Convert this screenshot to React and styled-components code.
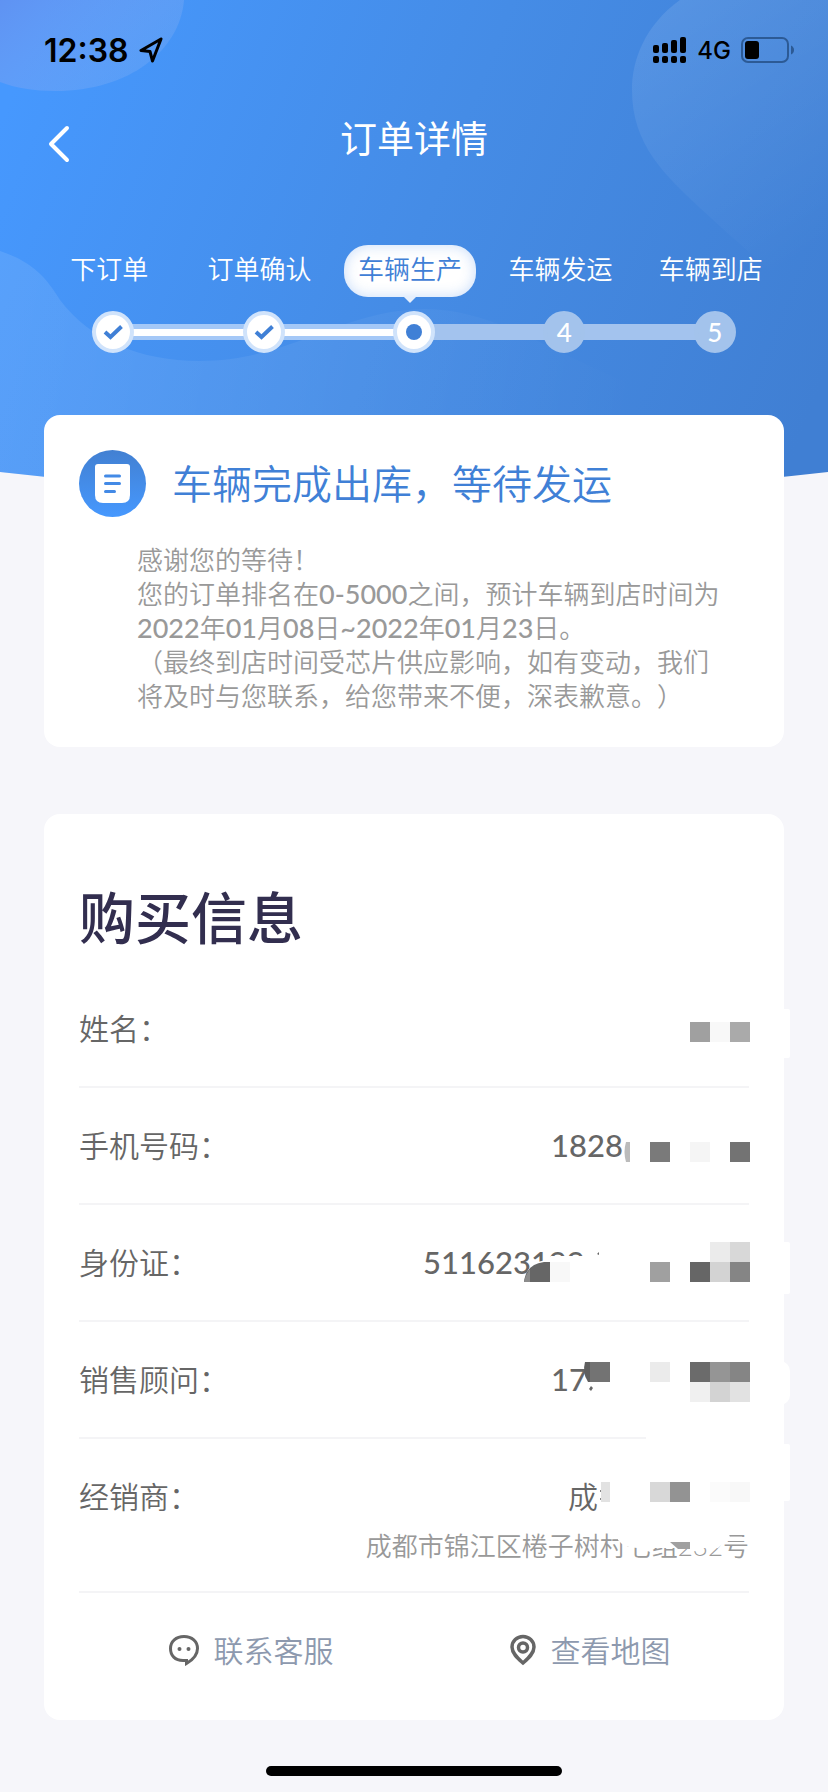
import React from 'react';
import styled, { createGlobalStyle } from 'styled-components';

const GlobalStyle = createGlobalStyle`
  body {
    margin: 0;
    background: #f6f6fa;
    font-family: Lato, 'Noto Sans CJK SC', sans-serif;
    font-weight: 350;
    text-spacing-trim: space-all;
  }

  * {
    box-sizing: border-box;
  }
`;

const Page = styled.div`
  position: relative;
  min-height: 100vh;
`;

const Backdrop = styled.svg`
  position: absolute;
  top: 0;
  left: 0;
  width: 100%;
  height: 492px;
  display: block;
`;

const Content = styled.div`
  position: relative;
  padding: 0 44px 16px;
`;

const StatusBar = styled.div`
  display: flex;
  align-items: center;
  justify-content: space-between;
  height: 100px;
  margin-right: -10px;
  font-family: Inter, sans-serif;
  color: #000;
`;

const StatusGroup = styled.div`
  display: flex;
  align-items: center;
  gap: 10px;
`;

const Time = styled.span`
  font-size: 32px;
  font-weight: 600;
`;

const Network = styled.span`
  font-size: 24px;
  font-weight: 500;
`;

const NavBar = styled.header`
  display: grid;
  grid-template-columns: 60px 1fr 60px;
  align-items: center;
  height: 84px;
  color: #fff;
`;

const BackButton = styled.button`
  display: flex;
  padding: 4px 4px 0;
  border: none;
  background: none;
  color: inherit;
`;

const NavTitle = styled.h1`
  margin: 0;
  padding-bottom: 6px;
  text-align: center;
  font-size: 37px;
  line-height: 48px;
  font-weight: 400;
`;

const Steps = styled.ol`
  display: grid;
  grid-template-columns: repeat(5, 1fr);
  margin: 61px -6px 62px;
  padding: 0;
  list-style: none;
`;

const Step = styled.li`
  display: flex;
  flex-direction: column;
  gap: 14px;
`;

const StepLabel = styled.span`
  position: relative;
  align-self: center;
  height: 52px;
  margin-right: 8px;
  padding: 0 14px;
  border-radius: 24px;
  font-size: 26px;
  line-height: 48px;
  white-space: nowrap;
  color: ${({ $current }) => ($current ? '#4080d6' : '#fff')};
  background: ${({ $current }) => ($current ? '#fff' : 'none')};
  box-shadow: ${({ $current }) =>
    $current ? 'inset 0 0 14px rgba(70, 140, 235, 0.3)' : 'none'};

  &::after {
    content: '';
    display: ${({ $current }) => ($current ? 'block' : 'none')};
    position: absolute;
    top: 100%;
    left: 50%;
    margin-left: -6px;
    border: 6px solid transparent;
    border-top-color: #e6effc;
    border-bottom: none;
  }
`;

const Track = styled.div`
  display: flex;
  align-items: center;
`;

const Segment = styled.span`
  flex: 1;
  height: 16px;
  margin: 0 -3px;
  visibility: ${({ $kind }) => ($kind === 'none' ? 'hidden' : 'visible')};
  background: ${({ $kind }) =>
    $kind === 'done'
      ? 'linear-gradient(#a4c8f7 5px, #fff 5px, #fff 12px, #a4c8f7 12px)'
      : '#a3c3ee'};
`;

const Node = styled.span`
  position: relative;
  display: flex;
  align-items: center;
  justify-content: center;
  width: 42px;
  height: 42px;
  border: 4px solid ${({ $todo }) => ($todo ? '#a3c3ec' : '#d0e3fb')};
  border-radius: 50%;
  background: ${({ $todo }) => ($todo ? '#a3c3ec' : '#fff')};
  color: #fff;
  font-size: 26px;
  line-height: 34px;
  font-weight: 500;
`;

const Dot = styled.span`
  width: 16px;
  height: 16px;
  border-radius: 50%;
  background: #4080d6;
`;

const Card = styled.section`
  padding: 0 35px;
  border-radius: 16px;
  background: #fff;
`;

const NoticeCard = styled(Card)`
  padding: 35px 60px 34px 35px;
`;

const NoticeHead = styled.div`
  display: flex;
  align-items: center;
  gap: 25px;
`;

const NoticeTitle = styled.h2`
  margin: 0;
  font-size: 40px;
  line-height: 68px;
  font-weight: 350;
  color: #4080d6;
`;

const NoticeText = styled.p`
  margin: ${({ $first }) => ($first ? '25px' : '0')} 0 0 58px;
  font-size: 26px;
  line-height: 34px;
  color: #999;
`;

const Num = styled.span`
  font-size: 27px;
  font-weight: 500;
`;

const InfoCard = styled(Card)`
  margin-top: 67px;
  padding-top: 70px;
  padding-bottom: 13px;
`;

const InfoTitle = styled.h2`
  margin: 0 0 19px;
  font-size: 56px;
  line-height: 68px;
  font-weight: 500;
  color: #322e4f;
`;

const InfoList = styled.dl`
  margin: 0;
`;

const InfoRow = styled.div`
  position: relative;
  display: flex;
  justify-content: space-between;
  padding: 40px 0 ${({ $last }) => ($last ? '28px' : '40px')};
  border-bottom: 2px solid #f4f4f6;
  font-size: 30px;
  line-height: 35px;
  color: #666;
`;

const InfoLabel = styled.dt`
  white-space: nowrap;
`;

const InfoValue = styled.dd`
  display: flex;
  flex-direction: column;
  align-items: flex-end;
  margin: 0;
`;

const ValueText = styled.span`
  width: ${({ $width }) => $width}px;
  font-size: ${({ $digits }) => ($digits ? '31px' : '30px')};
  font-weight: ${({ $digits }) => ($digits ? 500 : 350)};
`;

const Address = styled.span`
  margin-top: 15px;
  font-size: 26px;
  line-height: 34px;
  color: #999;
`;

const MosaicLayer = styled.svg`
  position: absolute;
  top: 0;
  right: -41px;
  overflow: visible;
`;

const Actions = styled.div`
  display: flex;
  justify-content: space-around;
  align-items: center;
  gap: 18px;
  height: 114px;
  padding-left: 10px;
`;

const Action = styled.button`
  display: flex;
  align-items: center;
  gap: 14px;
  padding: 0;
  border: none;
  background: none;
  font-family: inherit;
  font-size: 30px;
  line-height: 40px;
  font-weight: 350;
  color: #8d99ae;
`;

const HomeIndicator = styled.div`
  width: 40%;
  height: 10px;
  margin: 46px auto 0;
  border-radius: 5px;
  background: #000;
`;

const steps = [
  { label: '下订单', state: 'done' },
  { label: '订单确认', state: 'done' },
  { label: '车辆生产', state: 'current' },
  { label: '车辆发运', state: 'todo' },
  { label: '车辆到店', state: 'todo' },
];

// tiles: [x, y, colour]; each tile is 20px wide
const rows = [
  {
    label: '姓名：',
    tiles: [[170, 51, '#a0a0a0'], [190, 51, '#f8f8f8'], [210, 51, '#aaa']],
    edge: [38, 49, 2],
  },
  {
    label: '手机号码：',
    value: '1828',
    digits: true,
    width: 198,
    shapes: <path d="M106 54h4v20h-4q-3-10 0-20z" fill="#bbb" />,
    tiles: [[130, 54, '#7a7a7a'], [170, 54, '#f5f5f5'], [210, 54, '#737373']],
  },
  {
    label: '身份证：',
    value: '511623199',
    digits: true,
    width: 326,
    shapes: (
      <>
        <path d="M4 77q2-19 22-22l5-4h59v30H4z" fill="#fff" />
        <path d="M4 77q2-18 20-20h6v20z" fill="#666" />
        <path d="M4 77q1-6 6-13v13z" fill="#8c8c8c" />
        <path d="M77 49l2-2v3z" fill="#666" />
      </>
    ),
    tiles: [
      [30, 57, '#f8f8f8'],
      [130, 57, '#a0a0a0'],
      [170, 57, '#666'],
      [190, 57, '#d3d3d3'],
      [210, 57, '#858585'],
      [190, 37, '#ebebeb'],
      [210, 37, '#d8d8d8'],
    ],
    edge: [37, 52, 2],
  },
  {
    label: '销售顾问：',
    value: '17',
    digits: true,
    width: 198,
    shapes: (
      <>
        <path d="M65 40h5v20h-2q-6-9-3-20z" fill="#5f5f5f" />
        <path d="M69 67l2-3 2 2-2 3z" fill="#666" />
      </>
    ),
    tiles: [
      [70, 40, '#737373'],
      [130, 40, '#ebebeb'],
      [170, 40, '#6b6b6b'],
      [190, 40, '#959595'],
      [210, 40, '#858585'],
      [170, 60, '#f0f0f0'],
      [190, 60, '#d3d3d3'],
      [210, 60, '#e2e2e2'],
    ],
    edge: [39, 44, 10],
  },
  {
    label: '经销商：',
    value: '成',
    width: 181,
    address: '成都市锦江区棬子树村七组232号',
    shapes: (
      <>
        <rect x="126" y="-3" width="110" height="4" fill="#fff" />
        <path d="M80 52h1M80 60h1" stroke="#888" strokeWidth="2" />
        <path d="M81 43h9v20h-9z" fill="#e2e2e2" />
        <path d="M98 88h108l4 10h16v4h-20l-8 7h-80q-14 0-20-8z" fill="#fff" />
        <path d="M150 103h20v7h-12z" fill="#a0a0a0" />
      </>
    ),
    tiles: [
      [130, 43, '#d8d8d8'],
      [150, 43, '#939393'],
      [190, 43, '#fbfbfb'],
      [210, 43, '#f8f8f8'],
    ],
    edge: [5, 57, 2],
  },
];

const Mosaic = ({ tiles, shapes, edge }) => (
  <MosaicLayer width="270" height="117" viewBox="0 0 270 117" aria-hidden="true">
    {edge && <rect x="250" y={edge[0]} width="20" height={edge[1]} rx={edge[2]} fill="#fff" />}
    {shapes}
    {tiles.map(([x, y, fill]) => (
      <rect key={`${x}-${y}`} x={x} y={y} width="20" height="20" fill={fill} />
    ))}
  </MosaicLayer>
);

const HeroBackdrop = () => (
  <Backdrop viewBox="0 0 828 492" preserveAspectRatio="none" aria-hidden="true">
    <defs>
      <linearGradient id="sky" gradientUnits="userSpaceOnUse" x1="0" y1="120" x2="800" y2="440">
        <stop offset="0" stopColor="#4698fe" />
        <stop offset="0.5" stopColor="#458ce6" />
        <stop offset="1" stopColor="#407fd3" />
      </linearGradient>
      <linearGradient id="violet" x1="0" y1="0" x2="1" y2="0.6">
        <stop offset="0" stopColor="#8f88dc" stopOpacity="0.34" />
        <stop offset="1" stopColor="#cfd8f4" stopOpacity="0.12" />
      </linearGradient>
      <linearGradient id="drop" gradientUnits="userSpaceOnUse" x1="650" y1="20" x2="800" y2="260">
        <stop offset="0" stopColor="#fff" stopOpacity="0.1" />
        <stop offset="1" stopColor="#fff" stopOpacity="0" />
      </linearGradient>
      <linearGradient id="wave" gradientUnits="userSpaceOnUse" x1="0" y1="300" x2="640" y2="400">
        <stop offset="0" stopColor="#fff" stopOpacity="0.1" />
        <stop offset="1" stopColor="#fff" stopOpacity="0" />
      </linearGradient>
    </defs>
    <path d="M0 0H828V472Q784 477 740 481Q414 502 88 481Q44 477 0 472Z" fill="url(#sky)" />
    <path d="M0 0H184C180 50 130 91 55 91C35 91 15 88 0 82Z" fill="url(#violet)" />
    <path d="M680 0C645 25 632 60 632 90C632 145 665 175 700 208C745 250 790 285 828 330V0Z" fill="url(#drop)" />
    <path
      d="M0 251C30 261 45 275 60 300C90 340 140 361 200 361C290 361 340 310 425 309C510 310 570 370 680 400V485Q414 502 88 481Q44 477 0 472Z"
      fill="url(#wave)"
    />
  </Backdrop>
);

const Status = () => (
  <StatusBar>
    <StatusGroup>
      <Time>12:38</Time>
      <svg width="24" height="26" viewBox="0 0 24 26" fill="none" stroke="#000" strokeWidth="3" strokeLinejoin="round">
        <path d="M22 2L2 13.5L11 14.5L13.5 24Z" />
      </svg>
    </StatusGroup>
    <StatusGroup>
      <svg width="34" height="26" viewBox="0 0 34 26">
        <rect x="0" y="8" width="6" height="8" rx="2" />
        <rect x="9" y="6" width="6" height="10" rx="2" />
        <rect x="18" y="3" width="6" height="13" rx="2" />
        <rect x="27" y="0" width="6" height="16" rx="2" />
        <rect x="0" y="19" width="6" height="7" rx="2" />
        <rect x="9" y="19" width="6" height="7" rx="2" />
        <rect x="18" y="19" width="6" height="7" rx="2" />
        <rect x="27" y="19" width="6" height="7" rx="2" />
      </svg>
      <Network>4G</Network>
      <svg width="53" height="26" viewBox="0 0 53 26">
        <rect x="1" y="1" width="46" height="24" rx="6" fill="none" stroke="#2c5a95" strokeWidth="2" />
        <rect x="4" y="4" width="14" height="18" rx="3" />
        <path d="M50 8.500q3 1.500 3 4.500t-3 4.500z" fill="#2c5a95" />
      </svg>
    </StatusGroup>
  </StatusBar>
);

const segmentKind = (from, to) => {
  if (!from || !to) return 'none';
  return to.state === 'todo' ? 'todo' : 'done';
};

const Progress = () => (
  <Steps>
    {steps.map((step, i) => (
      <Step key={step.label}>
        <StepLabel $current={step.state === 'current'}>{step.label}</StepLabel>
        <Track>
          <Segment $kind={segmentKind(steps[i - 1], step)} />
          <Node $todo={step.state === 'todo'}>
            {step.state === 'done' && (
              <svg width="20" height="16" viewBox="0 0 20 16" fill="none" stroke="#4080d6" strokeWidth="4">
                <path d="M2 8L7.500 13L18.500 2.500" />
              </svg>
            )}
            {step.state === 'current' && <Dot />}
            {step.state === 'todo' && i + 1}
          </Node>
          <Segment $kind={segmentKind(step, steps[i + 1])} />
        </Track>
      </Step>
    ))}
  </Steps>
);

const App = () => (
  <Page lang="zh-CN">
    <GlobalStyle />
    <HeroBackdrop />
    <Content>
      <Status />
      <NavBar>
        <BackButton type="button" aria-label="返回">
          <svg width="22" height="38" viewBox="0 0 22 38" fill="none" stroke="#fff" strokeWidth="4" strokeLinecap="round" strokeLinejoin="round">
            <path d="M19 3L3 19L19 35" />
          </svg>
        </BackButton>
        <NavTitle>订单详情</NavTitle>
      </NavBar>
      <Progress />

      <NoticeCard>
        <NoticeHead>
          <svg width="68" height="68" viewBox="0 0 68 68">
            <defs>
              <linearGradient id="badge" x1="0" y1="0" x2="0" y2="1">
                <stop offset="0" stopColor="#4280d2" />
                <stop offset="1" stopColor="#4698fe" />
              </linearGradient>
            </defs>
            <circle cx="33.500" cy="33.500" r="33.500" fill="url(#badge)" />
            <path d="M19 14H48Q51 14 51 17V45Q51 53 43 53H24Q16 53 16 45V17Q16 14 19 14Z" fill="#fff" />
            <path d="M26.500 26H40.500M26.500 33.500H40.500M26.500 41.500H35.500" stroke="#438ae6" strokeWidth="3" strokeLinecap="round" />
          </svg>
          <NoticeTitle>车辆完成出库，等待发运</NoticeTitle>
        </NoticeHead>
        <NoticeText $first>感谢您的等待！</NoticeText>
        <NoticeText>
          您的订单排名在<Num>0-5000</Num>之间，预计车辆到店时间为
          <Num>2022</Num>年<Num>01</Num>月<Num>08</Num>日<Num>~2022</Num>年
          <Num>01</Num>月<Num>23</Num>日。
        </NoticeText>
        <NoticeText>
          （最终到店时间受芯片供应影响，如有变动，我们将及时与您联系，给您带来不便，深表歉意。）
        </NoticeText>
      </NoticeCard>

      <InfoCard>
        <InfoTitle>购买信息</InfoTitle>
        <InfoList>
          {rows.map((row) => (
            <InfoRow key={row.label} $last={Boolean(row.address)}>
              <InfoLabel>{row.label}</InfoLabel>
              <InfoValue>
                {row.value && (
                  <ValueText $width={row.width} $digits={row.digits}>
                    {row.value}
                  </ValueText>
                )}
                {row.address && <Address>{row.address}</Address>}
                <Mosaic tiles={row.tiles} shapes={row.shapes} edge={row.edge} />
              </InfoValue>
            </InfoRow>
          ))}
        </InfoList>
        <Actions>
          <Action type="button">
            <svg width="32" height="32" viewBox="0 0 32 32" fill="none" stroke="#666" strokeWidth="3">
              <path d="M16 2.500C24 2.500 29.500 7.500 29.500 14.500C29.500 21 24.500 26 18.500 29.500V26.500H15C7 26.500 2.500 21.500 2.500 14.500C2.500 7.500 8 2.500 16 2.500Z" />
              <circle cx="11.500" cy="15" r="2" fill="#666" stroke="none" />
              <circle cx="20.500" cy="15" r="2" fill="#666" stroke="none" />
            </svg>
            联系客服
          </Action>
          <Action type="button">
            <svg width="28" height="32" viewBox="0 0 28 32" fill="none" stroke="#666" strokeWidth="3.500">
              <path d="M14 29C9 24.500 3 19.500 3 13A11 10.500 0 0 1 25 13C25 19.500 19 24.500 14 29Z" />
              <circle cx="14" cy="13.500" r="4.500" />
            </svg>
            查看地图
          </Action>
        </Actions>
      </InfoCard>
      <HomeIndicator />
    </Content>
  </Page>
);

export default App;
